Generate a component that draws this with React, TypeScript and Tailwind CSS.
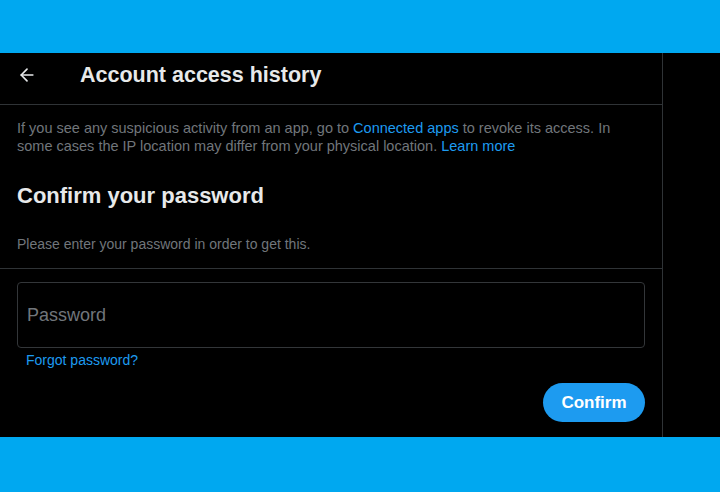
import { ArrowLeft } from "lucide-react";

export default function App() {
  return (
    <div
      className="flex h-[492px] w-[720px] flex-col bg-[#00a8f0]"
      style={{ fontFamily: '"Liberation Sans", Arial, sans-serif' }}
    >
      <div className="h-[53px] shrink-0" />
      <div className="flex h-[384px] shrink-0 bg-black">
        <div className="flex w-[663px] flex-col border-r border-[#2f3336]">
          <div className="flex h-[52px] shrink-0 items-center border-b border-[#2f3336] pl-[17px] pr-4 pb-[7px]">
            <div className="flex w-[63px] items-center">
              <ArrowLeft size={20} strokeWidth={2} className="text-[#e7e9ea]" />
            </div>
            <h1 className="text-[21.5px] font-bold text-[#e7e9ea]">Account access history</h1>
          </div>

          <div className="max-w-[642px] pl-[17px] pr-4 pt-[14px] text-[14.5px] leading-[18px] text-[#71767b]">
            If you see any suspicious activity from an app, go to{" "}
            <span className="text-[#1d9bf0]">Connected apps</span> to revoke its access. In
            some cases the IP location may differ from your physical location.{" "}
            <span className="text-[#1d9bf0]">Learn more</span>
          </div>

          <h2 className="pl-[17px] pr-4 pt-[29px] text-[22px] font-bold leading-[24px] text-[#e7e9ea]">
            Confirm your password
          </h2>

          <p className="border-b border-[#2f3336] pl-[17px] pr-4 pb-[15px] pt-[27px] text-[14px] leading-[18px] text-[#71767b]">
            Please enter your password in order to get this.
          </p>

          <div className="pl-[17px] pt-[13px]">
            <div className="flex h-[66px] w-[628px] items-center rounded border border-[#333639] px-[9px]">
              <span className="text-[18px] text-[#71767b]">Password</span>
            </div>
            <div className="pl-[9px] pt-[2px] text-[14px] leading-[20px] text-[#1d9bf0]">
              Forgot password?
            </div>
            <div className="flex w-[628px] justify-end pt-[13px]">
              <button className="h-[39px] w-[102px] rounded-full bg-[#1d9bf0] text-[17px] font-bold text-white">
                Confirm
              </button>
            </div>
          </div>
        </div>
        <div className="flex-1" />
      </div>
      <div className="flex-1" />
    </div>
  );
}
